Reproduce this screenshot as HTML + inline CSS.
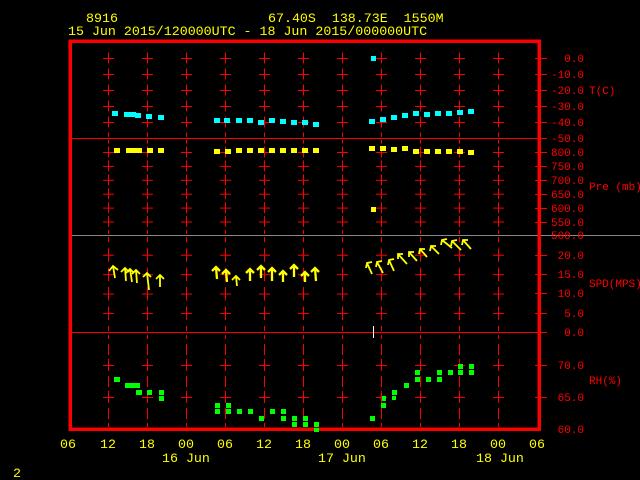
<!DOCTYPE html>
<html><head><meta charset="utf-8"><style>
html,body{margin:0;padding:0;background:#000;width:640px;height:480px;overflow:hidden}
svg{display:block}
text{font-family:"Liberation Mono",monospace}
</style></head><body>
<svg width="640" height="480" viewBox="0 0 640 480" xmlns="http://www.w3.org/2000/svg" shape-rendering="crispEdges">
<defs>
<pattern id="pT" patternUnits="userSpaceOnUse" x="89" y="50" width="39" height="16">
<path d="M19.5 2.5V13.5M14 8.5H25" stroke="#f00" stroke-width="1" fill="none"/></pattern>
<pattern id="pP" patternUnits="userSpaceOnUse" x="89" y="145.05" width="39" height="13.9">
<path d="M19.5 1.5V12.5M14 7.5H25" stroke="#f00" stroke-width="1" fill="none"/></pattern>
<pattern id="pS" patternUnits="userSpaceOnUse" x="89" y="245.3" width="39" height="19.4">
<path d="M19.5 3V16.5M14 10H25" stroke="#f00" stroke-width="1" fill="none"/></pattern>
<pattern id="pR" patternUnits="userSpaceOnUse" x="89" y="341" width="39" height="32">
<path d="M19.5 3V14M19.5 18V30M14 24.5H25" stroke="#f00" stroke-width="1" fill="none"/></pattern>
</defs>
<g font-size="13.3" fill="#ff0">
<text x="86" y="22">8916</text>
<text x="268" y="22" xml:space="preserve">67.40S  138.73E  1550M</text>
<text x="68" y="35" xml:space="preserve">15 Jun 2015/120000UTC - 18 Jun 2015/000000UTC</text>
</g>
<rect x="89" y="48" width="429" height="89" fill="url(#pT)"/>
<rect x="89" y="140" width="429" height="94" fill="url(#pP)"/>
<rect x="89" y="237" width="429" height="94" fill="url(#pS)"/>
<rect x="89" y="335" width="429" height="92" fill="url(#pR)"/>
<path d="M70 138.5H547M70 332.5H547" stroke="#f00" stroke-width="1"/>
<path d="M70 235.5H640" stroke="#888" stroke-width="1"/>
<rect x="70" y="41" width="469" height="388" fill="none" stroke="#f00" stroke-width="3.5"/>
<path stroke="#f00" stroke-width="1" d="M535 58.5h12M535 74.5h12M535 90.5h12M535 106.5h12M535 122.5h12M535 152.5h12M535 166.5h12M535 180.5h12M535 194.5h12M535 208.5h12M535 222.5h12M535 255.5h12M535 274.5h12M535 293.5h12M535 313.5h12M535 365.5h12M535 397.5h12"/>
<g font-size="11" fill="#f00" text-anchor="end">
<text x="584" y="62">0.0</text><text x="584" y="78">-10.0</text><text x="584" y="94">-20.0</text><text x="584" y="110">-30.0</text><text x="584" y="126">-40.0</text><text x="584" y="142">-50.0</text>
<text x="584" y="156">800.0</text><text x="584" y="170">750.0</text><text x="584" y="184">700.0</text><text x="584" y="198">650.0</text><text x="584" y="212">600.0</text><text x="584" y="226">550.0</text><text x="584" y="239">500.0</text>
<text x="584" y="259">20.0</text><text x="584" y="278">15.0</text><text x="584" y="297">10.0</text><text x="584" y="317">5.0</text><text x="584" y="336">0.0</text>
<text x="584" y="369">70.0</text><text x="584" y="401">65.0</text><text x="584" y="433">60.0</text>
</g>
<g font-size="11" fill="#f00">
<text x="589" y="94">T(C)</text><text x="589" y="190">Pre (mb)</text><text x="589" y="287">SPD(MPS)</text><text x="589" y="384">RH(%)</text>
</g>
<g font-size="13.3" fill="#ff0" text-anchor="middle">
<text x="68" y="448">06</text><text x="108" y="448">12</text><text x="147" y="448">18</text><text x="186" y="448">00</text><text x="225" y="448">06</text><text x="264" y="448">12</text><text x="303" y="448">18</text><text x="342" y="448">00</text><text x="381" y="448">06</text><text x="420" y="448">12</text><text x="459" y="448">18</text><text x="498" y="448">00</text><text x="537" y="448">06</text>
</g>
<g font-size="13.3" fill="#ff0">
<text x="162" y="462">16 Jun</text><text x="318" y="462">17 Jun</text><text x="476" y="462">18 Jun</text>
<text x="13" y="477">2</text>
</g>
<g fill="#0ff">
<rect x="112" y="111" width="6" height="5"/><rect x="124" y="112" width="6" height="5"/><rect x="130" y="112" width="6" height="5"/><rect x="135" y="113" width="6" height="5"/><rect x="146" y="114" width="6" height="5"/><rect x="158" y="115" width="6" height="5"/>
<rect x="214" y="118" width="6" height="5"/><rect x="224" y="118" width="6" height="5"/><rect x="236" y="118" width="6" height="5"/><rect x="247" y="118" width="6" height="5"/><rect x="258" y="120" width="6" height="5"/><rect x="269" y="118" width="6" height="5"/><rect x="280" y="119" width="6" height="5"/><rect x="291" y="120" width="6" height="5"/><rect x="302" y="120" width="6" height="5"/><rect x="313" y="122" width="6" height="5"/>
<rect x="371" y="56" width="5" height="5"/><rect x="369" y="119" width="6" height="5"/><rect x="380" y="117" width="6" height="5"/><rect x="391" y="115" width="6" height="5"/><rect x="402" y="113" width="6" height="5"/><rect x="413" y="111" width="6" height="5"/><rect x="424" y="112" width="6" height="5"/><rect x="435" y="111" width="6" height="5"/><rect x="446" y="111" width="6" height="5"/><rect x="457" y="110" width="6" height="5"/><rect x="468" y="109" width="6" height="5"/>
</g>
<g fill="#ff0">
<rect x="114" y="148" width="6" height="5"/><rect x="126" y="148" width="6" height="5"/><rect x="131" y="148" width="6" height="5"/><rect x="136" y="148" width="6" height="5"/><rect x="147" y="148" width="6" height="5"/><rect x="158" y="148" width="6" height="5"/>
<rect x="214" y="149" width="6" height="5"/><rect x="225" y="149" width="6" height="5"/><rect x="236" y="148" width="6" height="5"/><rect x="247" y="148" width="6" height="5"/><rect x="258" y="148" width="6" height="5"/><rect x="269" y="148" width="6" height="5"/><rect x="280" y="148" width="6" height="5"/><rect x="291" y="148" width="6" height="5"/><rect x="302" y="148" width="6" height="5"/><rect x="313" y="148" width="6" height="5"/>
<rect x="369" y="146" width="6" height="5"/><rect x="380" y="146" width="6" height="5"/><rect x="391" y="147" width="6" height="5"/><rect x="402" y="146" width="6" height="5"/><rect x="413" y="149" width="6" height="5"/><rect x="424" y="149" width="6" height="5"/><rect x="435" y="149" width="6" height="5"/><rect x="446" y="149" width="6" height="5"/><rect x="457" y="149" width="6" height="5"/><rect x="468" y="150" width="6" height="5"/>
<rect x="371" y="207" width="5" height="5"/>
</g>
<g fill="#0f0">
<rect x="114" y="377" width="6" height="5"/><rect x="125" y="383" width="5" height="5"/><rect x="130" y="383" width="5" height="5"/><rect x="135" y="383" width="5" height="5"/><rect x="136" y="390" width="6" height="5"/><rect x="147" y="390" width="5" height="5"/><rect x="159" y="390" width="5" height="5"/><rect x="159" y="396" width="5" height="5"/>
<rect x="215" y="403" width="5" height="5"/><rect x="215" y="409" width="5" height="5"/><rect x="226" y="403" width="5" height="5"/><rect x="226" y="409" width="5" height="5"/><rect x="237" y="409" width="5" height="5"/><rect x="248" y="409" width="5" height="5"/><rect x="259" y="416" width="5" height="5"/><rect x="270" y="409" width="5" height="5"/><rect x="281" y="409" width="5" height="5"/><rect x="281" y="416" width="5" height="5"/><rect x="292" y="416" width="5" height="5"/><rect x="292" y="422" width="5" height="5"/><rect x="303" y="416" width="5" height="5"/><rect x="303" y="422" width="5" height="5"/><rect x="314" y="422" width="5" height="5"/><rect x="314" y="428" width="5" height="4"/>
<rect x="370" y="416" width="5" height="5"/><rect x="381" y="403" width="5" height="5"/><rect x="382" y="396" width="4" height="5"/><rect x="392" y="390" width="5" height="5"/><rect x="392" y="396" width="4" height="4"/><rect x="404" y="383" width="5" height="5"/><rect x="415" y="370" width="5" height="5"/><rect x="415" y="377" width="5" height="5"/><rect x="426" y="377" width="5" height="5"/><rect x="437" y="370" width="5" height="5"/><rect x="437" y="377" width="5" height="5"/><rect x="448" y="370" width="5" height="5"/><rect x="458" y="364" width="5" height="5"/><rect x="458" y="370" width="5" height="5"/><rect x="469" y="364" width="5" height="5"/><rect x="469" y="370" width="5" height="5"/>
</g>
<path d="M373.5 326V338" stroke="#fff" stroke-width="1"/>
<g stroke="#ff0" fill="none" shape-rendering="auto" stroke-width="1.8">
<path d="M115 278L113 266M109 271L113 266L118 270"/>
<path d="M126 281L125 268M121 272L125 268L129 272"/>
<path d="M132 282L130 269M126 273L130 269L134 273"/>
<path d="M137 283L136 270M132 274L136 270L140 274"/>
<path d="M149 290L147 273M143 277L147 273L151 277"/>
<path d="M160 287L160 275M156 279L160 275L164 279"/>
<path d="M217 279L216 267M212 271L216 267L220 271" stroke-width="2.3"/>
<path d="M227 282L226 270M222 274L226 270L230 274" stroke-width="2.3"/>
<path d="M237 286L236 276M232 280L236 276L240 280"/>
<path d="M250 281L250 269M246 273L250 269L254 273" stroke-width="2.3"/>
<path d="M261 278L261 266M257 270L261 266L265 270" stroke-width="2.3"/>
<path d="M272 281L272 268M268 272L272 268L276 272" stroke-width="2.3"/>
<path d="M283 282L283 271M279 275L283 271L287 275" stroke-width="2.3"/>
<path d="M294 277L294 265M290 269L294 265L298 269" stroke-width="2.3"/>
<path d="M305 282L305 272M301 276L305 272L309 276" stroke-width="2.3"/>
<path d="M316 281L315 268M311 272L315 268L319 272" stroke-width="2.3"/>
<path d="M372 274L367 263M366 268L367 263L372 262"/>
<path d="M383 273L377 262M376 267L377 262L382 261"/>
<path d="M394 271L389 260M388 265L389 260L394 259"/>
<path d="M407 264L398 254M398 259L398 254L403 254"/>
<path d="M417 261L409 252M409 257L409 252L414 252"/>
<path d="M427 257L420 249M419 254L420 249L425 249"/>
<path d="M439 254L431 246M430 251L431 246L436 246"/>
<path d="M452 248L442 240M441 245L442 240L447 239"/>
<path d="M461 250L452 241M451 246L452 241L457 240"/>
<path d="M471 249L463 240M462 245L463 240L468 240"/>
</g>
</svg>
</body></html>
